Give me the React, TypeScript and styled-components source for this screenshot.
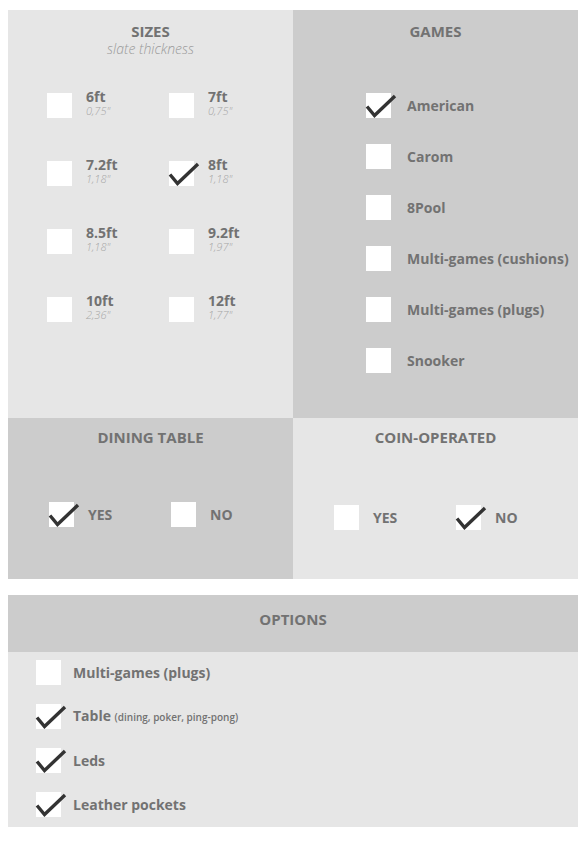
import React from 'react';
import styled, { createGlobalStyle } from 'styled-components';

const GlobalStyle = createGlobalStyle`
  html, body {
    margin: 0;
    padding: 0;
    background: #ffffff;
  }
  body {
    font-family: 'Open Sans', 'Liberation Sans', sans-serif;
    color: #727272;
  }
`;

const Page = styled.div`
  width: 570px;
  padding: 10px 0 0 8px;
`;

const Grid = styled.div`
  display: grid;
  grid-template-columns: 285px 285px;
  grid-template-rows: 408px 161px;
`;

const Panel = styled.section<{ $dark?: boolean; $pad?: number }>`
  background: ${p => (p.$dark ? '#cccccc' : '#e6e6e6')};
  padding-top: ${p => p.$pad ?? 11}px;
  box-sizing: border-box;
`;

const Title = styled.h2`
  margin: 0;
  font-size: 15px;
  line-height: 20px;
  font-weight: 700;
  text-align: center;
  color: #727272;
`;

const Subtitle = styled.div`
  font-size: 14px;
  line-height: 16px;
  font-style: italic;
  font-weight: 300;
  text-align: center;
  color: #9a9a9a;
`;

const SizeGrid = styled.div`
  display: grid;
  grid-template-columns: 122px 122px;
  row-gap: 43px;
  padding: 36px 0 0 39px;
`;

const Item = styled.label<{ $gap: number }>`
  display: flex;
  align-items: center;
  gap: ${p => p.$gap}px;
  height: 25px;
`;

const BoxWrap = styled.span`
  position: relative;
  flex: none;
  width: 25px;
  height: 25px;
  background: #ffffff;
`;

const Tick = styled.svg`
  position: absolute;
  left: 0;
  top: 0;
  overflow: visible;
`;

const SizeText = styled.span`
  display: flex;
  flex-direction: column;
  gap: 1px;
  align-self: flex-start;
  margin-top: -4px;
`;

const SizeName = styled.span`
  font-size: 14px;
  line-height: 15px;
  font-weight: 700;
  color: #727272;
`;

const SizeSub = styled.span`
  font-size: 11px;
  line-height: 12px;
  font-style: italic;
  font-weight: 300;
  color: #a6a6a6;
`;

const GameList = styled.div`
  display: flex;
  flex-direction: column;
  gap: 26px;
  padding: 52px 0 0 73px;
`;

const Label = styled.span`
  font-size: 14px;
  line-height: 20px;
  font-weight: 700;
  color: #727272;
  white-space: nowrap;
`;

const Small = styled.span`
  font-size: 10px;
  font-weight: 600;
`;

const YesNo = styled.div<{ $top: number }>`
  display: grid;
  grid-template-columns: 122px 122px;
  padding: ${p => p.$top}px 0 0 41px;
`;

const Options = styled.section`
  margin-top: 16px;
  background: #e6e6e6;
`;

const OptionsHead = styled.div`
  height: 57px;
  box-sizing: border-box;
  padding-top: 14px;
  background: #cccccc;
`;

const OptionList = styled.div`
  display: flex;
  flex-direction: column;
  gap: 19px;
  padding: 8px 0 10px 28px;
`;

const Check = ({ on }: { on?: boolean }) => (
  <BoxWrap>
    {on && (
      <Tick width="25" height="25" viewBox="0 0 25 25">
        <path d="M1 13.5 L8.5 22.5 L29 3" fill="none" stroke="#333333" strokeWidth="3.4" />
      </Tick>
    )}
  </BoxWrap>
);

const sizes = [
  { name: '6ft', slate: '0,75"' },
  { name: '7ft', slate: '0,75"' },
  { name: '7.2ft', slate: '1,18"' },
  { name: '8ft', slate: '1,18"', on: true },
  { name: '8.5ft', slate: '1,18"' },
  { name: '9.2ft', slate: '1,97"' },
  { name: '10ft', slate: '2,36"' },
  { name: '12ft', slate: '1,77"' },
];

const games = [
  { name: 'American', on: true },
  { name: 'Carom' },
  { name: '8Pool' },
  { name: 'Multi-games (cushions)' },
  { name: 'Multi-games (plugs)' },
  { name: 'Snooker' },
];

export default function App() {
  return (
    <Page>
      <GlobalStyle />
      <Grid>
        <Panel>
          <Title>SIZES</Title>
          <Subtitle>slate thickness</Subtitle>
          <SizeGrid>
            {sizes.map(s => (
              <Item key={s.name} $gap={14}>
                <Check on={s.on} />
                <SizeText>
                  <SizeName>{s.name}</SizeName>
                  <SizeSub>{s.slate}</SizeSub>
                </SizeText>
              </Item>
            ))}
          </SizeGrid>
        </Panel>
        <Panel $dark>
          <Title>GAMES</Title>
          <GameList>
            {games.map(g => (
              <Item key={g.name} $gap={16}>
                <Check on={g.on} />
                <Label>{g.name}</Label>
              </Item>
            ))}
          </GameList>
        </Panel>
        <Panel $dark $pad={9}>
          <Title>DINING TABLE</Title>
          <YesNo $top={55}>
            <Item $gap={14}>
              <Check on />
              <Label>YES</Label>
            </Item>
            <Item $gap={14}>
              <Check />
              <Label>NO</Label>
            </Item>
          </YesNo>
        </Panel>
        <Panel $pad={9}>
          <Title>COIN-OPERATED</Title>
          <YesNo $top={58}>
            <Item $gap={14}>
              <Check />
              <Label>YES</Label>
            </Item>
            <Item $gap={14}>
              <Check on />
              <Label>NO</Label>
            </Item>
          </YesNo>
        </Panel>
      </Grid>
      <Options>
        <OptionsHead>
          <Title>OPTIONS</Title>
        </OptionsHead>
        <OptionList>
          <Item $gap={12}>
            <Check />
            <Label>Multi-games (plugs)</Label>
          </Item>
          <Item $gap={12}>
            <Check on />
            <Label>
              Table <Small>(dining, poker, ping-pong)</Small>
            </Label>
          </Item>
          <Item $gap={12}>
            <Check on />
            <Label>Leds</Label>
          </Item>
          <Item $gap={12}>
            <Check on />
            <Label>Leather pockets</Label>
          </Item>
        </OptionList>
      </Options>
    </Page>
  );
}
